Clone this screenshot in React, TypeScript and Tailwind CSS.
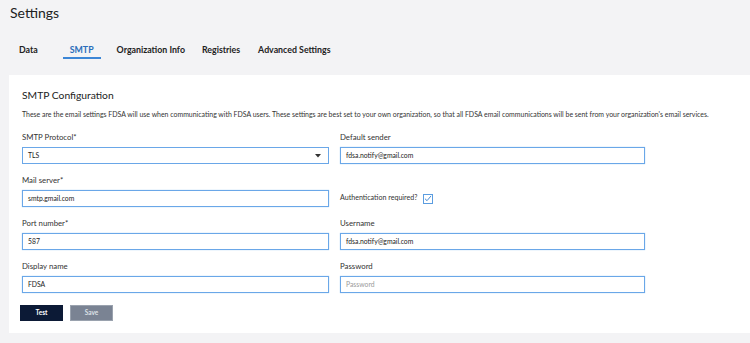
import React from "react";

const font = { fontFamily: "Lato, 'Liberation Sans', sans-serif" };

function Field({ label, value, placeholder }: { label: string; value?: string; placeholder?: string }) {
  return (
    <div className="flex flex-col">
      <div className="h-[14px] flex items-center text-[7.8px] text-[#333]">{label}</div>
      <div className="mt-[2px] h-[17px] border-[1.5px] border-[#6aa7e8] bg-white flex items-center px-[5px] text-[6.8px] shadow-[0_0_1px_#9cc6f0]">
        {value ? <span className="text-[#222]">{value}</span> : <span className="text-[#9a9a9a]">{placeholder}</span>}
      </div>
    </div>
  );
}

export default function App() {
  return (
    <div className="w-[750px] h-[343px] bg-[#f3f3f5] overflow-hidden" style={font}>
      <div className="pl-[10px] pt-[3px] text-[14px] text-[#222] leading-[20px]">Settings</div>
      <div className="flex items-end mt-[20px] h-[16px] text-[8.8px] font-bold text-[#222]">
        <div className="ml-[12px] px-[7px] h-[16px] flex items-start">Data</div>
        <div className="ml-[18px] px-[7px] h-[16px] flex items-start text-[#2a6ebb] border-b-2 border-[#3c86d6]">SMTP</div>
        <div className="ml-[9px] px-[7px] h-[16px] flex items-start">Organization Info</div>
        <div className="ml-[3px] px-[7px] h-[16px] flex items-start">Registries</div>
        <div className="ml-[4px] px-[7px] h-[16px] flex items-start">Advanced Settings</div>
      </div>
      <div className="ml-[9px] mt-[16px] h-[258px] bg-white pl-[13px] pt-[12px]">
        <div className="text-[10.3px] text-[#222] leading-[16px]">SMTP Configuration</div>
        <div className="mt-[6px] text-[6.95px] text-[#333] leading-[10px] whitespace-nowrap">
          These are the email settings FDSA will use when communicating with FDSA users. These settings are best set to your own organization, so that all FDSA email communications will be sent from your organization's email services.
        </div>
        <div className="mt-[12px] grid grid-cols-[307px_305px] gap-x-[11px] gap-y-[10px]">
          <div className="flex flex-col">
            <div className="h-[14px] flex items-center text-[7.8px] text-[#333]">SMTP Protocol*</div>
            <div className="mt-[2px] h-[17px] border-[1.5px] border-[#6aa7e8] bg-white flex items-center justify-between px-[5px] text-[6.8px] text-[#222]">
              <span>TLS</span>
              <svg width="6" height="4" viewBox="0 0 6 4" className="mr-[2px]"><path d="M0 0 L6 0 L3 3.5 Z" fill="#333" /></svg>
            </div>
          </div>
          <Field label="Default sender" value="fdsa.notify@gmail.com" />
          <Field label="Mail server*" value="smtp.gmail.com" />
          <div className="flex items-end">
            <div className="h-[17px] flex items-center gap-[6px] text-[7.1px] text-[#333]">
              <span>Authentication required?</span>
              <span className="w-[10px] h-[10px] border-[1.5px] border-[#5b9de0] flex items-center justify-center">
                <svg width="8" height="7" viewBox="0 0 9 8"><path d="M1 4.2 L3.4 6.5 L8 1" stroke="#3f87d4" strokeWidth="1.1" fill="none" /></svg>
              </span>
            </div>
          </div>
          <Field label="Port number*" value="587" />
          <Field label="Username" value="fdsa.notify@gmail.com" />
          <Field label="Display name" value="FDSA" />
          <Field label="Password" placeholder="Password" />
        </div>
        <div className="mt-[12px] flex gap-[7px] -ml-[2px]">
          <button className="w-[43px] h-[16px] bg-[#0c1a36] text-white text-[6.5px] font-bold">Test</button>
          <button className="w-[43px] h-[16px] bg-[#7a8393] text-[#dde1e7] text-[6.5px] font-bold border border-[#9aa2ae]">Save</button>
        </div>
      </div>
    </div>
  );
}
